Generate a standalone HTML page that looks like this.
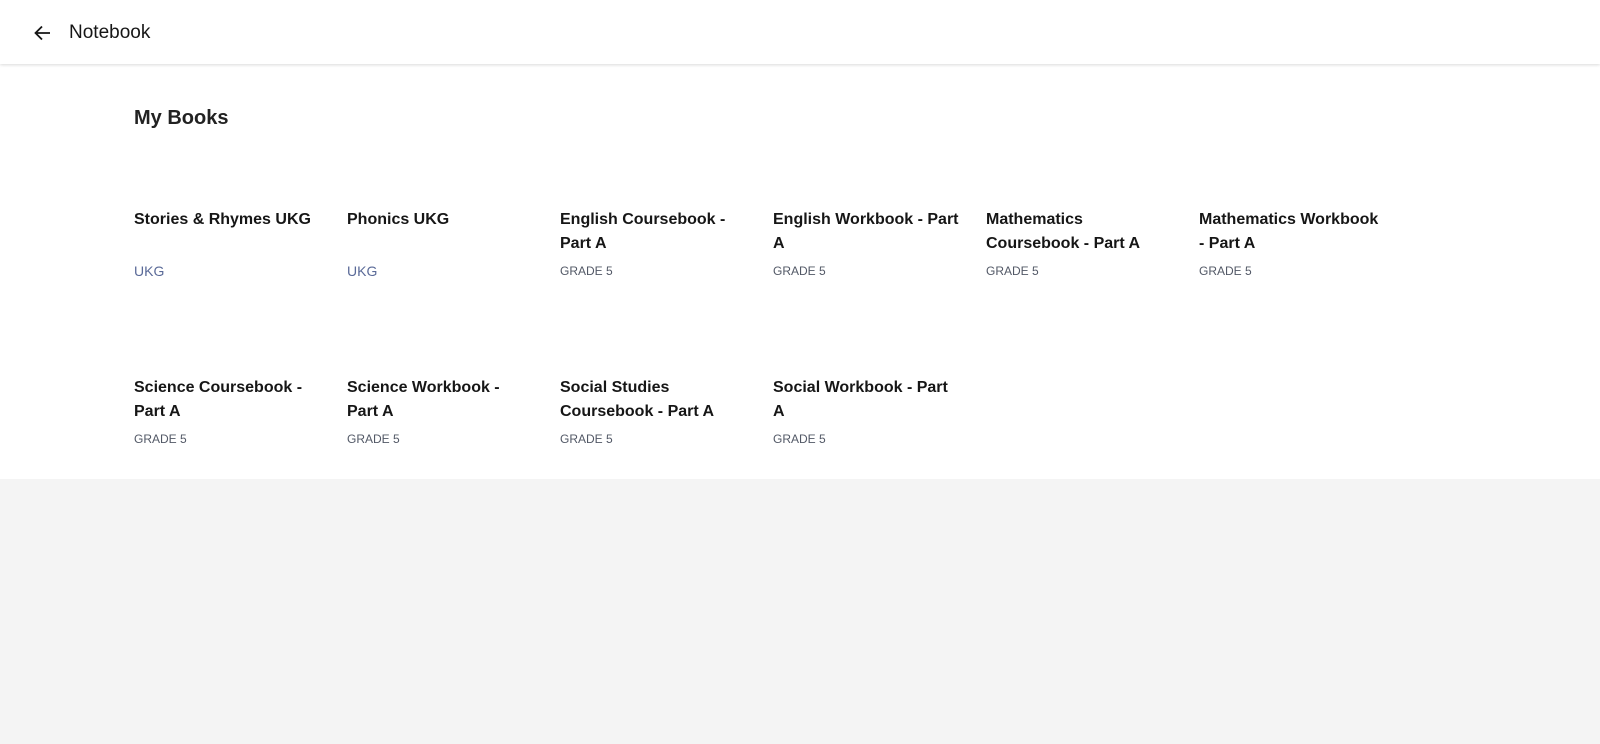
<!DOCTYPE html>
<html><head><style>
*{margin:0;padding:0;box-sizing:border-box}
body{width:1600px;height:744px;background:#f4f4f4;font-family:"Liberation Sans",sans-serif;color:#161616;overflow:hidden}
.hdr{height:64px;background:#fff;box-shadow:0 1px 3px rgba(0,0,0,.15);position:relative;z-index:2}
.hdr svg{position:absolute;left:33px;top:23px}
.hdr span{position:absolute;left:69px;top:22px;font-size:19px;color:#161616}
.main{background:#fff;height:415px;position:relative}
h1{position:absolute;left:134px;top:43px;font-size:20px;font-weight:bold;color:#222}
.card{position:absolute;width:188px}
.t{font-size:16px;font-weight:bold;line-height:24px;color:#161616;height:48px}
.s{margin-top:8px;font-size:12px;color:#525866}
.u{margin-top:7px;font-size:14px;color:#5a6a98}
</style></head><body>
<div class="hdr"><svg width="20" height="20" viewBox="0 0 20 20"><path d="M17 10H3M9 3.5L2.5 10 9 16.5" fill="none" stroke="#161616" stroke-width="1.8"/></svg><span>Notebook</span></div>
<div class="main">
<h1>My Books</h1>
<div class="card" style="left:134px;top:144px"><div class="t">Stories &amp; Rhymes UKG</div><div class="u">UKG</div></div>
<div class="card" style="left:347px;top:144px"><div class="t">Phonics UKG</div><div class="u">UKG</div></div>
<div class="card" style="left:560px;top:144px"><div class="t">English Coursebook - Part A</div><div class="s">GRADE 5</div></div>
<div class="card" style="left:773px;top:144px"><div class="t">English Workbook - Part A</div><div class="s">GRADE 5</div></div>
<div class="card" style="left:986px;top:144px"><div class="t">Mathematics Coursebook - Part A</div><div class="s">GRADE 5</div></div>
<div class="card" style="left:1199px;top:144px"><div class="t">Mathematics Workbook - Part A</div><div class="s">GRADE 5</div></div>
<div class="card" style="left:134px;top:312px"><div class="t">Science Coursebook - Part A</div><div class="s">GRADE 5</div></div>
<div class="card" style="left:347px;top:312px"><div class="t">Science Workbook - Part A</div><div class="s">GRADE 5</div></div>
<div class="card" style="left:560px;top:312px"><div class="t">Social Studies Coursebook - Part A</div><div class="s">GRADE 5</div></div>
<div class="card" style="left:773px;top:312px"><div class="t">Social Workbook - Part A</div><div class="s">GRADE 5</div></div>
</div>
</body></html>
